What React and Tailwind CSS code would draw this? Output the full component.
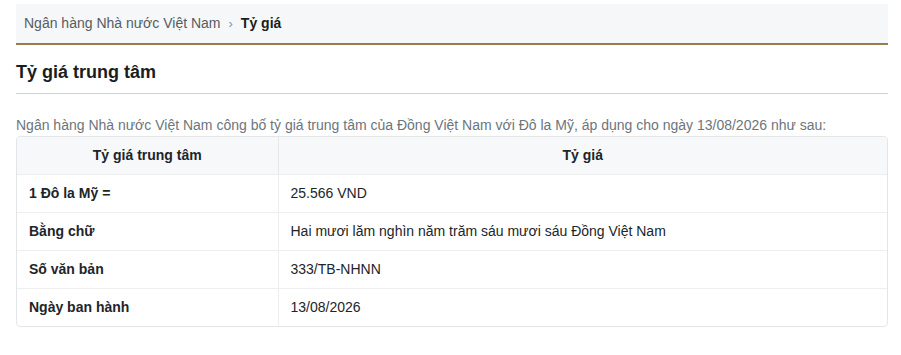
import React from 'react';

const rows = [
  { label: '1 Đô la Mỹ =', value: '25.566 VND' },
  { label: 'Bằng chữ', value: 'Hai mươi lăm nghìn năm trăm sáu mươi sáu Đồng Việt Nam' },
  { label: 'Số văn bản', value: '333/TB-NHNN' },
  { label: 'Ngày ban hành', value: '13/08/2026' },
];

function App() {
  return (
    <div className="bg-white min-h-[355px] pl-4 pr-[13px] pt-1 text-[14px] text-[#212529]" style={{ fontFamily: '"Liberation Sans", Arial, sans-serif' }}>
      <nav className="flex items-center h-[41px] px-2 bg-[#f6f7f8] border-b-2 border-[#9b7b4c]">
        <span className="text-[#555c63]">Ngân hàng Nhà nước Việt Nam</span>
        <span className="mx-2 text-[#8a9097] text-[13px]">›</span>
        <span className="font-bold text-[#1a1d20]">Tỷ giá</span>
      </nav>

      <h2 className="mt-[15px] text-[18px] font-bold leading-[24px] text-[#1a1d20] pb-[9px] border-b border-[#cfd2d5]">
        Tỷ giá trung tâm
      </h2>

      <p className="mt-[21px] text-[#6c757d] leading-[20px]">
        Ngân hàng Nhà nước Việt Nam công bố tỷ giá trung tâm của Đồng Việt Nam với Đô la Mỹ, áp dụng cho ngày 13/08/2026 như sau:
      </p>

      <div className="mt-px border border-[#e3e6e9] rounded-[4px] overflow-hidden">
        <table className="w-full border-collapse">
          <thead>
            <tr className="bg-[#f7f8f9] h-[37px]">
              <th className="w-[261px] font-bold text-center border-r border-[#e6e8eb]">Tỷ giá trung tâm</th>
              <th className="font-bold text-center">Tỷ giá</th>
            </tr>
          </thead>
          <tbody>
            {rows.map((r) => (
              <tr key={r.label} className="h-[38px] border-t border-[#eceef0]">
                <td className="px-3 font-bold border-r border-[#eceef0]">{r.label}</td>
                <td className="px-3">{r.value}</td>
              </tr>
            ))}
          </tbody>
        </table>
      </div>
    </div>
  );
}

export default App;
